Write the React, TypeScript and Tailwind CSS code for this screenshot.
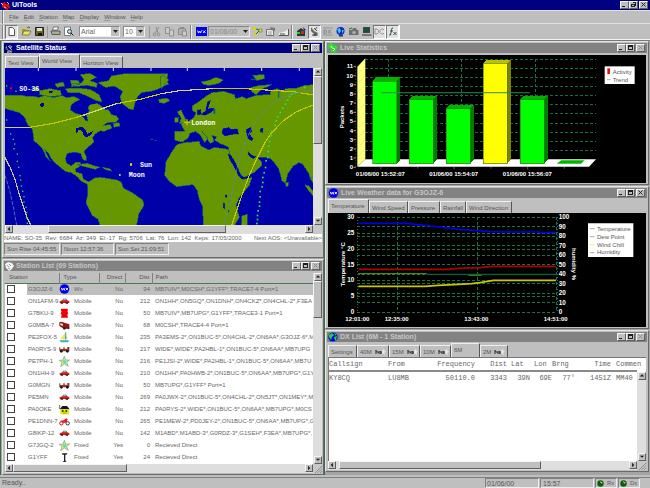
import React from "react";

type Kids = { children?: React.ReactNode };

const RAISED = "border border-t-[#f4f4f4] border-l-[#f4f4f4] border-r-[#5f5f5f] border-b-[#5f5f5f] bg-[#bfbfbf]";

/* ---------- window frame ---------- */

function CaptionButton({ kind, dim }: { kind: "min" | "max" | "restore" | "close"; dim?: boolean }) {
  const c = dim ? "#8a8a8a" : "#202020";
  return (
    <button aria-label={kind} className={`flex h-2 w-[9px] items-center justify-center ${RAISED}`}>
      <svg viewBox="0 0 7 6" className="h-[6px] w-[7px]" shapeRendering="crispEdges" fill="none" stroke={c}>
        {kind === "min" && <path d="M1 4.500h3" />}
        {kind === "max" && <path d="M1.500 1.500h4v3h-4zM1 .8h5" />}
        {kind === "restore" && <path d="M2.500 .5h3v3M1.500 2.500h3v2h-3z" />}
        {kind === "close" && <path d="M1.500 .5l4 4M5.500 .5l-4 4" shapeRendering="auto" />}
      </svg>
    </button>
  );
}

function TitleBar({ title, icon, active, maxed, dimClose }: { title: string; icon: React.ReactNode; active?: boolean; maxed?: boolean; dimClose?: boolean }) {
  return (
    <div className={`flex h-[10px] shrink-0 items-center pl-px pr-[2px] ${active ? "bg-[#000080]" : "bg-[#828282]"}`}>
      {icon}
      <h2 className={`ml-[2px] flex-1 truncate font-bold text-[7px] leading-[10px] ${active ? "text-white" : "text-[#c6c6c6]"}`}>{title}</h2>
      <CaptionButton kind="min" />
      <CaptionButton kind={maxed ? "restore" : "max"} />
      <span className="w-px" />
      <CaptionButton kind="close" dim={dimClose} />
    </div>
  );
}

function ChildWindow({ title, icon, active, dimClose, children }: Kids & { title: string; icon: React.ReactNode; active?: boolean; dimClose?: boolean }) {
  return (
    <section className="flex min-w-0 flex-col border border-t-[#e6e6e6] border-l-[#e6e6e6] border-r-[#6a6a6a] border-b-[#6a6a6a] bg-[#bfbfbf] p-px">
      <TitleBar title={title} icon={icon} active={active} dimClose={dimClose} />
      {children}
    </section>
  );
}

function Tabs({ items, active }: { items: { label: string; w: string; mark?: boolean }[]; active: string }) {
  return (
    <div role="tablist" className="flex h-[15px] items-end pl-px text-[#555]">
      {items.map((t) => {
        const on = t.label === active;
        return (
          <button
            key={t.label}
            role="tab"
            aria-selected={on}
            className={`flex items-center whitespace-nowrap border-t border-l border-r border-t-[#f0f0f0] border-l-[#f0f0f0] border-r-[#555] pl-[2px] leading-[10px] ${t.w} ${on ? "h-[14px] pb-[2px]" : "h-3"}`}
          >
            {t.label}
            {t.mark && (
              <svg viewBox="0 0 11 7" className="ml-[3px] h-[7px] w-[11px] shrink-0">
                <path d="M1 2v4M1 2.500l3 3V3M5 3l2 3M7 3L5 6" stroke="#222" fill="none" />
                <path d="M8.500 0l1 2.500L11 3 9.500 4.500 10 7 8 5.500 6.500 6.500 7 4 6 2.500h2z" fill="#e6e6e6" />
              </svg>
            )}
          </button>
        );
      })}
    </div>
  );
}

/* ---------- scroll bars ---------- */

function Arrow({ dir }: { dir: "up" | "down" | "left" | "right" }) {
  const d = { up: "M1 4h5L3.500 1.500z", down: "M1 2h5L3.500 4.500z", left: "M4.500 1v5L2 3.500z", right: "M2.500 1v5L5 3.500z" }[dir];
  return (
    <button aria-label={`Scroll ${dir}`} className={`flex h-2 w-2 shrink-0 items-center justify-center ${RAISED}`}>
      <svg viewBox="0 0 7 7" className="h-[6px] w-[6px]"><path d={d} fill="#1c1c1c" /></svg>
    </button>
  );
}

function HScroll({ before, thumb, corner }: { before: number; thumb: number; corner?: boolean }) {
  return (
    <div className="flex h-[9px] shrink-0 bg-[#dedede]">
      <Arrow dir="left" />
      <div className="flex flex-1">
        <div style={{ width: `${before}%` }} />
        <div className={`h-2 ${RAISED}`} style={{ width: `${thumb}%` }} />
      </div>
      <Arrow dir="right" />
      <div className="flex w-[9px] items-end justify-end bg-[#c8c8c8]">
        {corner && (
          <svg viewBox="0 0 8 8" className="h-2 w-2" stroke="#808080" strokeWidth=".8"><path d="M1 8l7-7M3.500 8L8 3.500M6 8l2-2" /></svg>
        )}
      </div>
    </div>
  );
}

function VScroll({ thumb }: { thumb: number }) {
  return (
    <div className="flex w-[9px] shrink-0 flex-col items-center bg-[#dedede]">
      <Arrow dir="up" />
      <div className="w-full flex-1">
        {thumb > 0 && <div className={`w-[9px] ${RAISED}`} style={{ height: `${thumb}%` }} />}
      </div>
      <Arrow dir="down" />
    </div>
  );
}

/* ---------- icons ---------- */

const WxIcon = () => (
  <svg viewBox="0 0 12 12" className="h-[10px] w-[11px] shrink-0">
    <circle cx="6" cy="6" r="5.800" fill="#0000e8" />
    <path d="M2 4.500l1.300 3 1.200-2.500 1.200 2.500 1-3M7.500 7.500l3-3M8 4.800l2 2.700" stroke="#fff" fill="none" strokeWidth="1" />
  </svg>
);
const DishIcon = () => (
  <svg viewBox="0 0 9 9" className="h-[9px] w-[9px] shrink-0">
    <path d="M1 1l2 5 5 1-3 1-1 1H2l1-2L1 4z" fill="#9a9a9a" />
    <path d="M3 2l4 4M5 1v3M7 2L5 5M2 8h5" stroke="#ddd" fill="none" strokeWidth=".8" />
    <path d="M0 3l2 3M3 8h2" stroke="#4a4a4a" />
  </svg>
);
const GlobeIcon = () => (
  <svg viewBox="0 0 10 10" className="h-[10px] w-[10px] shrink-0">
    <circle cx="5" cy="5" r="4.600" fill="#0000e0" />
    <path d="M1 3l3-2 2 2-2 2-1 3-2-3zM6 5l3-1-1 4-1 1zM6 1l3 2-2 .5z" fill="#18d840" />
  </svg>
);
const LeafIcon = () => (
  <svg viewBox="0 0 10 10" className="h-[10px] w-[10px] shrink-0">
    <path d="M0 2l3-2 3 2-2 3-3 1zM4 4l4-2 2 3-3 2zM2 6l3 0 4 2-3 2-3-1z" fill="#2be22b" />
    <path d="M3 3l1 2 3 1-2 2" stroke="#e8ffe8" fill="none" />
  </svg>
);
const HandIcon = () => (
  <svg viewBox="0 0 9 9" className="h-[9px] w-[9px] shrink-0">
    <path d="M0 2l3-2 4 1 2 3-3 4-2 1-3-3z" fill="#f2f2f2" />
    <path d="M2 3l2 2M4 2l2 2M3 6l2 1" stroke="#777" strokeWidth=".7" />
  </svg>
);
const AppIcon = () => (
  <svg viewBox="0 0 9 9" className="h-[9px] w-[9px] shrink-0">
    <path d="M1 2l3-1 1 2 3 0 1 4-3 2-3-2-2-1z" fill="#e01010" />
    <path d="M0 2l2 2M6 1l2 2M3 6l2 1" stroke="#fff" strokeWidth=".8" />
    <path d="M5 5l3 3" stroke="#111" />
  </svg>
);

type Sym = "wx" | "car" | "shirt" | "van" | "boat" | "jeep" | "star" | "house" | "bike" | "mast";

function StationSymbol({ kind }: { kind: Sym }) {
  if (kind === "wx") return <WxIcon />;
  return (
    <svg viewBox="0 0 33 33" className="h-[11px] w-[11px]">
      {kind === "car" && (
        <g><path d="M2 16l8-3 3-5h8l4 5 6 3v5H2z" fill="#e01818" /><path d="M12 13l2-4h6l2 4z" fill="#30d8d8" /><path d="M5 19h7v4H5zM20 19h7v4h-7z" fill="#222" /></g>
      )}
      {kind === "shirt" && <path d="M7 2h18l2 4-2 5 3 5-3 5 2 8H6l2-8-3-5 3-5-3-5z" fill="#f00000" />}
      {kind === "van" && (
        <g><path d="M1 7l6-2 24 8v13H14L1 18z" fill="#9c1212" /><path d="M4 9l8 3v6l-8-3z" fill="#d8e8f0" /><circle cx="16" cy="25" r="4" fill="#222" /><circle cx="28" cy="24" r="3" fill="#222" /></g>
      )}
      {kind === "boat" && (
        <g><path d="M20 1L4 22h16z" fill="#e8e848" /><path d="M20 1v22" stroke="#159" strokeWidth="2" /><path d="M20 4l6 17h-5z" fill="#8ee0e0" /><path d="M1 25h30l-5 6H6z" fill="#30b0b8" /></g>
      )}
      {kind === "jeep" && (
        <g><path d="M1 10h3v5h9v-5h4v5h8v-6h6v13H1z" fill="#6e4038" /><circle cx="7" cy="22" r="4" fill="#151515" /><circle cx="25" cy="22" r="4" fill="#151515" /><path d="M3 15h8v4H3zM18 14h8v4h-8z" fill="#c8281c" /></g>
      )}
      {kind === "star" && (
        <g><path d="M16 1l4 11 12 0-9 7 5 12-12-7-11 8 4-13-8-6 11-1z" fill="#f0f040" stroke="#4878a8" strokeWidth="1.500" /><path d="M12 13h9v9h-9z" fill="#40e0e8" /></g>
      )}
      {kind === "house" && (
        <g><path d="M2 3v12" stroke="#222" strokeWidth="2" /><path d="M2 16L10 6h14l8 10z" fill="#181818" /><path d="M4 16h26v15H4z" fill="#e8e800" /><path d="M9 19h4v4H9zM20 19h4v4h-4zM12 27h10" fill="#222" stroke="#222" /></g>
      )}
      {kind === "bike" && (
        <g><circle cx="7" cy="22" r="5" fill="none" stroke="#b01818" strokeWidth="3" /><circle cx="26" cy="22" r="5" fill="none" stroke="#333" strokeWidth="3" /><path d="M4 14l10-1 8-6 4 3-4 10H10z" fill="#f01818" /></g>
      )}
      {kind === "mast" && <path d="M9 4h16l-2 4h-4v18l4 4H11l4-4V8h-5z" fill="#222" />}
    </svg>
  );
}

/* ---------- tool bar ---------- */

function Tool({ name, pressed, children }: Kids & { name: string; pressed?: boolean }) {
  return (
    <button
      aria-label={name}
      className={`flex h-[14px] w-[13px] shrink-0 items-center justify-center border ${pressed ? "border-t-[#777] border-l-[#777] border-r-white border-b-white bg-[#e2e2e2]" : "border-transparent"}`}
    >
      <svg viewBox="0 0 11 11" className="h-[11px] w-[11px] shrink-0" fill="none">{children}</svg>
    </button>
  );
}

const Band = () => <span className="mx-px h-[14px] w-[2px] shrink-0 border-l border-r border-l-[#808080] border-r-[#f0f0f0]" />;

function Combo({ label, value, w, plain }: { label: string; value: string; w: string; plain?: boolean }) {
  return (
    <label className={`relative flex h-[11px] shrink-0 border border-t-[#8a8a8a] border-l-[#8a8a8a] border-r-[#eee] border-b-[#eee] ${w} ${plain ? "bg-[#bfbfbf] text-[#8a8a8a]" : "bg-white text-[#666]"}`}>
      <select aria-label={label} defaultValue={value} className="w-full appearance-none bg-transparent pl-px text-[7px] leading-[9px] outline-none">
        <option>{value}</option>
      </select>
      <span className="pointer-events-none absolute right-0 top-0 flex h-[9px] w-[8px] items-center justify-center bg-[#bfbfbf]">
        <svg viewBox="0 0 5 3" className="h-[3px] w-[5px]"><path d="M0 0h5L2.500 3z" fill="#222" /></svg>
      </span>
    </label>
  );
}

function ToolBar() {
  return (
    <div className="flex h-4 shrink-0 items-center border-b border-b-[#f2f2f2] bg-[#bfbfbf] pl-px">
      <Band />
      <Tool name="New" pressed><path d="M3 1.500h3.500l2 2v6H3z" fill="#fff" stroke="#555" /></Tool>
      <span className="w-[2px]" />
      <Tool name="Open"><path d="M1 3h3l1 1h3v5H1z" fill="#a8a000" /><path d="M1 9l2-4h7L8 9z" fill="#f0e850" stroke="#444" strokeWidth=".6" /><path d="M6 2c1-1 2-1 3 0" stroke="#222" strokeWidth=".8" /></Tool>
      <Tool name="Save"><path d="M1.500 1.500h8v8h-8z" fill="#6a6a10" stroke="#222" /><path d="M3 2h5v3H3z" fill="#ddd" /><path d="M4 7h4v2H4z" fill="#111" /></Tool>
      <span className="mx-px h-3 w-px bg-[#999]" />
      <Tool name="Print"><path d="M3.500 1h5l-1 3h-5z" fill="#fff" stroke="#555" strokeWidth=".8" /><path d="M1 5h9v3.500H2z" fill="#aaa" stroke="#444" strokeWidth=".8" /><path d="M6 7h2" stroke="#cc0" /></Tool>
      <Tool name="Print preview"><path d="M1.500 1h6v8.500h-6z" fill="#fff" stroke="#666" strokeWidth=".8" /><circle cx="6.500" cy="5.500" r="2" stroke="#245" fill="#bde" /><path d="M8 7l2.500 2.500" stroke="#222" /></Tool>
      <span className="w-1" />
      <Combo label="Font" value="Arial" w="w-[41px]" />
      <span className="w-[3px]" />
      <Combo label="Font size" value="10" w="w-[22px]" />
      <span className="w-1" />
      <span className="h-3 w-px bg-[#999]" />
      <Tool name="Cut"><path d="M5 1l2 6M8 1L4 7" stroke="#8d8d8d" /><circle cx="3.500" cy="8.500" r="1.300" stroke="#8d8d8d" /><circle cx="7.500" cy="8.500" r="1.300" stroke="#8d8d8d" /></Tool>
      <Tool name="Copy"><path d="M1.500 1.500h4v6h-4zM5.500 4h4v6h-4z" fill="#ccc" stroke="#8d8d8d" /></Tool>
      <Tool name="Paste"><path d="M1.500 2.500h7v6h-7z" fill="#b0b0b0" stroke="#8d8d8d" /><path d="M3 1.500h4M5.500 5h4v5h-4z" fill="#ccc" stroke="#8d8d8d" /></Tool>
      <Band />
      <span className="w-[2px]" />
      <Tool name="Weather"><path d="M0 1h11v9H0z" fill="#0000f0" /><path d="M1.500 4.500l1 2.500 1-2 1 2 1-2.500M7 4.500L9.500 7M9.500 4.500L7 7" stroke="#fff" strokeWidth=".9" /></Tool>
      <Combo label="Date" value="01/06/00" w="w-[42px]" plain />
      <span className="w-px" />
      <Tool name="Tree"><path d="M1 1h3v3H1zM2 7h3v3H2z" fill="#d8d800" /><path d="M7 3h3v3H7z" fill="#e0e020" stroke="#555" strokeWidth=".5" /><path d="M4 3l3 1M4 8l3-3" stroke="#127a30" /></Tool>
      <Tool name="Properties"><path d="M1.500 3.500h7v6h-7z" fill="#eee" stroke="#555" strokeWidth=".8" /><path d="M5 1l5 1v3L6 4z" fill="#777" /><path d="M3 6h4M3 8h4" stroke="#777" strokeWidth=".7" /></Tool>
      <Tool name="Chart"><path d="M1 9h9V3L8 5 5 6 1 7z" fill="#eee" /><path d="M1 9.500h9.500V3" stroke="#555" /><path d="M2 8h5" stroke="#2b6a3a" /></Tool>
      <Band />
      <span className="w-px" />
      <Tool name="Stations"><path d="M1 5l4-3 4 3v5H1z" fill="#17402a" /><path d="M5 5h3v3H5z" fill="#e02020" /><path d="M7 1l3 3-2 1z" fill="#22b" /><path d="M1 6h3v2H1z" fill="#2c2" /></Tool>
      <Tool name="Satellite" pressed><path d="M2 1l3 4 4 2-2 3H4l1-2-3-3z" fill="#666" /><path d="M5 2l3 3M8 1L6 4M3 9h6" stroke="#333" strokeWidth=".8" /></Tool>
      <Tool name="DX"><path d="M1 2h9.500M1 9h9.500" stroke="#8a8a8a" strokeWidth=".8" /><path d="M2 4v3.500h1.500l1-1V5l-1-1zM6 4l3 3.500M9 4L6 7.500" stroke="#777" strokeWidth=".9" /></Tool>
      <Tool name="World"><circle cx="5.500" cy="5" r="4" fill="#1020d0" /><path d="M2 3l3-1 1 3-2 3zM7 4h2L7 8z" fill="#30d0e0" /><path d="M4 9h4v1.500H4z" fill="#333" /></Tool>
      <Tool name="Camera"><path d="M1 4h3l1-2h3l1 2h1.500v5H1z" fill="#6b7068" /><circle cx="6" cy="6.500" r="1.700" fill="#a9b0a4" /><path d="M1 3l3-1" stroke="#345f3c" /></Tool>
      <Tool name="Terminal"><path d="M2 1h7v6H2z" fill="#444" /><path d="M3 2h5v4H3z" fill="#14523c" /><path d="M1 8h9.500v2H1z" fill="#777" /></Tool>
      <Tool name="DC" pressed><path d="M1 3v5h2l1.500-1.500v-2L3 3zM10 4L9 3H7.500L6 4.500v2L7.500 8H9l1-1" stroke="#8a8a8a" strokeWidth=".9" /></Tool>
      <Tool name="Function" pressed><path d="M6 2H5L3.500 9H2M3 5h3M6.500 6l3 3M9.500 6l-3 3" stroke="#355a40" /></Tool>
      <span className="h-[14px] w-px bg-white" />
    </div>
  );
}

/* ---------- satellite map ---------- */

function WorldMap() {
  const westDots = [[18, 76], [46, 92], [18, 178], [30, 220], [38, 236], [42, 250], [40, 264], [50, 280], [50, 302], [54, 320], [58, 345], [60, 358], [62, 376], [66, 392], [70, 408], [70, 424], [76, 440], [78, 456], [78, 472], [80, 488]];
  const eastDots = [[433, 80], [405, 95], [395, 100], [388, 107], [382, 118], [376, 130], [368, 142], [360, 155], [352, 168], [348, 180], [345, 194], [335, 212], [334, 225], [328, 242], [326, 256], [324, 272], [323, 290], [318, 300], [316, 320], [312, 336], [308, 350], [308, 365], [306, 378], [300, 392], [300, 408], [298, 424], [298, 436], [294, 450], [292, 464], [292, 476], [290, 488]];
  return (
    <svg viewBox="15 24 924 471" preserveAspectRatio="xMidYMid slice" className="h-[157px] min-w-0 flex-1 bg-[#0000a8]" role="img" aria-label="World map">
      <g fill="#669600" stroke="#0a6a68" strokeWidth="2" shapeRendering="crispEdges">
        {/* Americas */}
        <path d="M10 105L60 105 75 108 98 109 118 112 135 106 160 113 185 107 200 113 222 110 240 118 228 124 214 134 211 150 226 160 240 163 250 172 256 182 264 184 260 168 268 152 264 142 270 134 290 130 304 138 312 148 326 150 334 164 350 168 356 178 348 186 322 188 310 196 332 194 336 204 312 214 300 212 286 222 278 232 282 246 264 262 252 274 258 288 258 302 248 298 242 280 226 276 202 280 196 296 200 310 214 318 228 306 244 308 238 320 226 326 228 336 246 342 250 358 266 366 284 354 300 352 316 354 350 360 364 366 370 384 394 396 428 420 432 436 416 462 410 496 300 496 294 478 276 466 264 440 258 428 264 400 262 372 244 364 232 350 214 338 196 334 176 318 158 302 146 280 134 268 144 292 152 304 138 290 126 264 102 242 97 206 84 196 74 172 58 158 10 144z" />
        {/* Arctic islands */}
        <path d="M118 92L150 86 182 92 184 106 150 110 120 104zM164 72L190 66 194 78 172 82zM210 60L236 62 240 74 216 76zM240 44L270 40 290 52 270 62 292 70 290 82 262 76 240 78 214 80 216 72 244 70 252 58zM196 86L230 84 270 88 298 104 306 126 284 120 262 108 236 98 204 98zM98 84L112 80 118 90 104 94z" />
        <path d="M294 68L326 62 334 48 368 42 504 41 500 60 506 72 484 82 462 92 424 98 408 116 400 150 386 146 366 130 360 110 368 94 344 78 316 82z" />
        <path d="M340 190L358 188 360 198 342 202zM232 314L262 310 284 318 300 322 286 328 262 322zM308 322L330 326 336 334 314 328z" />
        <path d="M476 118L500 114 510 122 494 130 478 128z" />
      </g>
      <g transform="translate(480 0)">
        <g fill="#669600" stroke="#0a6a68" strokeWidth="2" shapeRendering="crispEdges">
          {/* Europe, Asia */}
          <path d="M45 214L75 214 66 198 62 190 86 184 102 172 108 158 98 152 96 138 112 128 136 110 156 98 190 94 224 104 226 116 248 110 260 116 288 106 330 104 332 92 350 86 372 94 376 86 410 84 434 76 470 74 470 380 452 360 446 340 428 312 416 308 400 318 384 340 376 370 366 362 356 326 340 304 326 292 290 292 304 304 306 316 284 336 250 354 236 334 206 282 206 262 180 250 164 240 170 230 156 226 162 244 150 250 136 226 124 212 144 236 134 248 122 226 106 214 90 220 84 234 66 246 44 240z" />
          {/* Africa */}
          <path d="M50 254L74 248 118 244 122 258 148 270 162 262 206 268 212 292 226 318 238 350 246 358 276 352 268 376 238 412 228 436 238 472 224 496 130 496 128 438 118 420 112 392 100 374 50 380 28 364 14 346 18 306 34 278z" />
          <path d="M52 156L64 150 72 168 80 186 58 190 64 174zM44 174L56 172 54 186 44 186zM124 66L150 60 168 52 190 60 176 70 150 76 132 74zM278 46L312 44 314 56 290 62zM274 82L300 76 336 74 304 88 288 104 276 96zM246 468L262 462 262 496 244 496zM434 374L446 378 470 404 470 420 446 392zM376 370L386 366 384 378 378 378zM0 50L10 46 26 60 4 86zM450 352L466 354 466 366 456 364z" />
        </g>
        <g fill="#0000a8" stroke="#0a6a68" strokeWidth="1" shapeRendering="crispEdges">
          <path d="M188 206L206 202 214 208 232 206 236 222 214 224 196 228 186 222zM258 208L274 200 276 214 268 222 280 236 276 244 262 234zM300 206L310 204 308 218 300 216zM264 274L274 284 288 290 280 296 266 288zM112 150L122 148 124 164 112 164zM142 126L152 120 144 146 162 144 166 150 136 166 120 164 136 154z" />
          <path d="M204 280L212 284 228 310 242 344 252 352 270 348 270 354 246 358 234 346 218 314 206 292z" />
          <path d="M196 404L202 404 200 414 196 412zM190 428L194 430 194 446 190 444zM202 450L208 450 206 458z" />
        </g>
      </g>
      <g fill="#0000a8" shapeRendering="crispEdges">
        <path d="M226 206L244 200 254 206 262 222 278 214 276 222 260 232 250 226 246 212 236 210 230 222z" />
        <path d="M120 132L132 128 130 142 122 140zM146 92L160 92 156 100 148 98zM244 120L262 118 286 124 290 130 268 132 246 138z" />
      </g>
      <g fill="#0a6a78"><path d="M452 236h8v3h-8zM464 240h6v3h-6zM640 148h6v14h-6zM834 94h4v20h-4zM752 56h18v3h-18z" /></g>
      <path d="M115 24v9M228 24v9M340 24v9M453 24v9M562 24v9M673 24v9M785 24v9M898 24v9" stroke="#e8e8e8" strokeWidth="3" />
      <g fill="none" strokeWidth="3.500" shapeRendering="crispEdges">
        <path d="M15 203H88" stroke="#c8c8a0" />
        <path d="M88 202L160 190 230 172 270 158 350 131 420 118 480 102 540 92 640 86 720 85 800 90 880 95 939 105" stroke="#c8c800" />
        <path d="M250 166L350 131 M480 102L540 92 640 86" stroke="#d8d880" />
        <path d="M939 135L890 155 850 182 815 218 795 248 770 297 748 345 720 422 695 496" stroke="#c8c800" />
        <path d="M15 293L32 325 46 362 60 410 80 470 93 496" stroke="#c8c880" />
      </g>
      <g fill="none" stroke="#5f86a8" strokeWidth="2.500">
        <path d="M15 346L30 395 42 450 50 496" strokeDasharray="12 4" />
        <path d="M939 92L880 100 830 120 790 155 765 187 740 235 720 290 705 350 690 430 670 496" strokeDasharray="14 3" />
      </g>
      <g fill="#30e050">
        {westDots.map(([x, y]) => <rect key={`${x}-${y}`} x={x} y={y} width="4" height="4" />)}
        {eastDots.map(([x, y]) => <rect key={`${x}-${y}`} x={x + 478} y={y} width="5" height="5" />)}
      </g>
      <path d="M30 82h6v6h-6z" fill="#f00" />
      <path d="M390 310h6v7h-6z" fill="#e8e800" />
      <path d="M357 342h5v6h-5z" fill="#b8b8a0" />
      <path d="M551 187h20M561 178v18" stroke="#d8c000" strokeWidth="4" />
      <g fill="#fff" fontFamily="'Liberation Mono', monospace" fontWeight="700" fontSize="20">
        <text x="58" y="92">SO-36</text>
        <text x="420" y="321">Sun</text>
        <text x="386" y="351">Moon</text>
        <text x="574" y="195">London</text>
      </g>
    </svg>
  );
}

function SatelliteWindow() {
  return (
    <ChildWindow title="Satellite Status" icon={<DishIcon />} active dimClose>
      <Tabs active="World View" items={[{ label: "Text View", w: "w-[34px]" }, { label: "World View", w: "w-[41px]" }, { label: "Horizon View", w: "w-[43px]" }]} />
      <div className="flex pl-px">
        <WorldMap />
        <VScroll thumb={48} />
      </div>
      <div className="pl-px"><HScroll before={12} thumb={61} /></div>
      <p className="flex h-2 justify-between overflow-hidden whitespace-pre bg-white leading-[8px] text-[#666]">
        <span>NAME: SO-35  Rev: 6684  Az: 349  El:-17  Rg: 5706  Lat: 76  Lon: 142  Keps: 17/05/2000</span>
        <span>Next AOS: &lt;Unavailable&gt;</span>
      </p>
      <div className="flex h-[14px] items-center gap-px text-[#555]">
        {[["Sun Rise 04:45:55", "w-14"], ["Noon 12:57:36", "w-[53px]"], ["Sun Set 21:09:51", "w-[54px]"]].map(([t, w]) => (
          <span key={t} className={`h-3 whitespace-nowrap border border-t-[#808080] border-l-[#808080] border-r-[#eee] border-b-[#eee] pl-[2px] leading-[10px] ${w}`}>{t}</span>
        ))}
      </div>
    </ChildWindow>
  );
}

/* ---------- station list ---------- */

const stations: [string, Sym, string, string, string, string][] = [
  ["G3OJZ-6", "wx", "Wx", "No", "94", "MB7UIV*,M0CSH*,G1YFF*,TRACE7-4 Port=1"],
  ["ON1AFM-9", "car", "Mobile", "No", "212", "ON1HH*,ON5GQ*,ON1DNH*,ON4CKZ*,ON4CHL-2*,F3EA"],
  ["G7BKU-9", "shirt", "Mobile", "No", "50", "MB7UIV*,MB7UPG*,G1YFF*,TRACE3-1 Port=1"],
  ["G0MBA-7", "van", "Mobile", "No", "68", "M0CSH*,TRACE4-4 Port=1"],
  ["PE2FOX-5", "boat", "Mobile", "No", "235", "PA3EMS-2*,ON1BUC-5*,ON4CHL-2*,ON6AA*,G3OJZ-6*,M"],
  ["PA0RYS-9", "jeep", "Mobile", "No", "217", "WIDE*,WIDE*,PA2HBL-1*,ON1BUC-5*,ON6AA*,MB7UPG"],
  ["PE7PH-1", "star", "Mobile", "No", "216", "PE1JSI-2*,WIDE*,PA2HBL-1*,ON1BUC-5*,ON6AA*,MB7U"],
  ["ON1HH-9", "car", "Mobile", "No", "210", "ON1HH*,PA0HWB-2*,ON1BUC-5*,ON6AA*,MB7UPG*,G1Y"],
  ["G0MGN", "jeep", "Mobile", "No", "50", "MB7UPG*,G1YFF* Port=1"],
  ["PE5MN", "car", "Mobile", "No", "269", "PA0JWX-2*,ON1BUC-5*,ON4CHL-2*,ON5JT*,ON1MEY*,M"],
  ["PA0OKE", "house", "Mobile", "No", "212", "PA0RYS-2*,WIDE*,ON1BUC-5*,ON6AA*,MB7UPG*,M0CS"],
  ["PE1DNN-7", "bike", "Mobile", "No", "265", "PE1MEW-2*,PD0JEY-2*,ON1BUC-5*,ON6AA*,MB7UPG*,G"],
  ["G8IKP-12", "car", "Mobile", "No", "142", "M1ABD*,M1ABD-3*,G0RDZ-3*,G1SEH*,F3EA*,MB7UPG*,"],
  ["G7JGQ-2", "star", "Fixed", "Yes", "0", "Recieved Direct"],
  ["G1YFF", "mast", "Fixed", "Yes", "24", "Recieved Direct"],
];

function StationWindow() {
  const th = "border-r border-r-[#808080] p-0 font-normal";
  return (
    <ChildWindow title="Station List (69 Stations)" icon={<HandIcon />} dimClose>
      <div className="mt-[2px] flex h-[191px] pl-px">
        <div className="min-w-0 flex-1 overflow-hidden bg-white">
          <table className="w-full table-fixed border-collapse text-[#666]">
            <colgroup>
              <col className="w-[22px]" /><col className="w-8" /><col className="w-[14px]" /><col className="w-[26px]" /><col className="w-[26px]" /><col className="w-[27px]" /><col />
            </colgroup>
            <thead>
              <tr className="h-[10px] border-b border-b-[#4a7a50] bg-[#bfbfbf] text-left leading-[9px] text-[#555]">
                <th colSpan={2} className={`${th} pl-1`}>Station</th>
                <th colSpan={2} className={`${th} pl-1`}>Type</th>
                <th className={`${th} pr-[2px] text-right`}>Direct</th>
                <th className={`${th} pr-[2px] text-right`}>Dist</th>
                <th className="p-0 pl-[3px] font-normal">Path</th>
              </tr>
            </thead>
            <tbody>
              {stations.map(([call, sym, type, direct, dist, path], i) => (
                <tr key={call} className="h-3 whitespace-nowrap leading-[11px]">
                  <td className="p-0 pl-[2px]">
                    <input type="checkbox" aria-label={call} className="block h-2 w-2 appearance-none border border-[#444] bg-white" />
                  </td>
                  <td className={`p-0 pl-px ${i === 0 ? "bg-[#bfbfbf]" : ""}`}>{call}</td>
                  <td className={`p-0 ${i === 0 ? "bg-[#bfbfbf]" : ""}`}><StationSymbol kind={sym} /></td>
                  <td className={`p-0 pl-px ${i === 0 ? "bg-[#bfbfbf]" : ""}`}>{type}</td>
                  <td className={`p-0 pr-[2px] text-right ${i === 0 ? "bg-[#bfbfbf]" : ""}`}>{direct}</td>
                  <td className={`p-0 pr-[2px] text-right ${i === 0 ? "bg-[#bfbfbf]" : ""}`}>{dist}</td>
                  <td className={`overflow-hidden p-0 pl-[3px] ${i === 0 ? "bg-[#bfbfbf]" : ""}`}>{path}</td>
                </tr>
              ))}
            </tbody>
          </table>
        </div>
        <VScroll thumb={21} />
      </div>
      <div className="pl-px"><HScroll before={0} thumb={39} corner /></div>
    </ChildWindow>
  );
}

/* ---------- statistics chart ---------- */

const SANS = "'Liberation Sans', Arial, sans-serif";

function StatsChart() {
  const bars = [[143, 123], [253, 179], [364, 206], [475, 70], [586, 179]];
  const rows = Array.from({ length: 12 }, (_, i) => i);
  return (
    <svg viewBox="9 45 954 384" className="mt-[2px] ml-px mr-px h-[128px] bg-black" role="img" aria-label="Packets over time" fontFamily={SANS}>
      <g stroke="#14703c" strokeWidth="3" strokeDasharray="9 6" shapeRendering="crispEdges">
        {rows.slice(0, 11).map((i) => <path key={i} d={`M121 ${57 + Math.round(i * 27.4)}H813`} />)}
        <path d="M190 57V358M410 57V358M631 57V358" />
      </g>
      <path d="M97 380L121 358H813L792 380z" fill="#fff" />
      <path d="M97 80L121 55V358L97 380z" fill="#ffff80" />
      <path d="M100 100l20-20M100 128l20-20M100 155l20-20M100 182l20-20M100 210l20-20M100 237l20-20M100 264l20-20M100 292l20-20M100 320l20-20M100 347l20-20" stroke="#d0cc60" />
      {bars.map(([x, y]) => {
        const yellow = y < 100;
        return (
          <g key={x} shapeRendering="crispEdges">
            <path d={`M${x} ${y}l11 -11h71l-10 11z`} fill={yellow ? "#c0c000" : "#00b400"} />
            <path d={`M${x + 72} ${y}l10 -11V360l-10 11z`} fill={yellow ? "#808000" : "#007c00"} />
            <path d={`M${x} ${y}h72V371h-72z`} fill={yellow ? "#ffff00" : "#00ff00"} stroke="#3c7a1c" strokeWidth="2" />
          </g>
        );
      })}
      <path d="M695 371L709 361H779L768 371z" fill="#00b400" />
      <path d="M170 158H614" stroke="#2c8a50" strokeWidth="4" opacity=".8" />
      <path d="M92 80V380" stroke="#14703c" strokeWidth="3" strokeDasharray="3 6" />
      <path d="M168 381v7M387 381v7M608 381v7M278 381v5M498 381v5M718 381v5" stroke="#888" strokeWidth="2" />
      <g fill="#fff" fontSize="18" fontWeight="700">
        {rows.map((n) => <text key={n} x="84" y={388 - Math.round(n * 27.5)} textAnchor="end">{n}</text>)}
        {rows.map((n) => <path key={n} d={`M86 ${382 - Math.round(n * 27.5)}h6`} stroke="#fff" strokeWidth="2" />)}
        <text x="166" y="409" textAnchor="middle">01/06/00 15:52:07</text>
        <text x="386" y="409" textAnchor="middle">01/06/00 15:54:07</text>
        <text x="607" y="409" textAnchor="middle">01/06/00 15:56:07</text>
        <text transform="translate(56 231) rotate(-90)" textAnchor="middle">Packets</text>
      </g>
      <path d="M839 79h90v53h-90z" fill="#fff" />
      <path d="M847 85h8v17h-8z" fill="#e01010" />
      <path d="M846 119h11" stroke="#888" strokeWidth="2" />
      <g fill="#555" fontSize="18"><text x="863" y="101">Activity</text><text x="863" y="125">Trend</text></g>
    </svg>
  );
}

/* ---------- weather chart ---------- */

function WeatherChart() {
  const left = [0, 5, 10, 15, 20, 25, 30];
  const right = [0, 10, 20, 30, 40, 50, 60, 70, 80, 90, 100];
  const yl = (v: number) => 381 - Math.round((v * 284) / 30);
  const yr = (v: number) => 381 - Math.round(v * 2.84);
  return (
    <svg viewBox="12 84 948 342" className="ml-px mr-px h-[114px] bg-black" role="img" aria-label="Temperature and humidity" fontFamily={SANS}>
      <g stroke="#1c7440" strokeWidth="3" strokeDasharray="9 6" shapeRendering="crispEdges">
        {left.map((v) => <path key={v} d={`M97 ${yl(v)}H693`} />)}
        {right.slice(1, 10).map((v) => <path key={v} d={`M97 ${yr(v)}H693`} />)}
        <path d="M217 97V381M456 97V381M693 97V381" />
        <path d="M96 97V381M698 97V381" strokeDasharray="3 6" />
      </g>
      <g fill="none" strokeWidth="5">
        <path d="M100 115H245L270 118 320 123 360 128 400 133 450 136 500 140 560 141 640 141 650 143H693" stroke="#0000e0" />
        <path d="M100 253H370L400 250 465 248 500 244H693" stroke="#b00000" />
        <path d="M100 266H305" stroke="#4c8a10" strokeWidth="4" /><path d="M305 268H693" stroke="#006838" strokeWidth="4" />
        <path d="M430 271H470" stroke="#4c8a10" strokeWidth="3" />
        <path d="M100 304H300L340 301 400 298 440 296 465 293 505 286H693" stroke="#c8c800" />
      </g>
      <g fill="#fff" fontSize="19" fontWeight="700">
        {left.map((v) => <text key={v} x="88" y={yl(v) + 6} textAnchor="end">{v}</text>)}
        {right.map((v) => <text key={v} x="701" y={yr(v) + 6}>{v}</text>)}
      </g>
      <g fill="#fff" fontSize="18" fontWeight="700" textAnchor="middle">
        <text x="97" y="409">12:01:00</text><text x="215" y="409">12:35:00</text><text x="454" y="409">13:43:00</text><text x="692" y="409">14:51:00</text>
        <text transform="translate(60 238) rotate(-90)">Temperature °C</text>
        <text transform="translate(742 237) rotate(90)">humidity %</text>
      </g>
      <path d="M789 115h136v101H789z" fill="#fff" />
      <path d="M795 131h14M795 155h14M795 203h14" stroke="#888" strokeWidth="2" />
      <path d="M795 179h14" stroke="#f0f000" strokeWidth="2" />
      <g fill="#555" fontSize="18"><text x="816" y="137">Temperature</text><text x="816" y="161">Dew Point</text><text x="816" y="185">Wind Chill</text><text x="816" y="208">Humidity</text></g>
    </svg>
  );
}

/* ---------- DX list ---------- */

function DxWindow() {
  return (
    <ChildWindow title="DX List (6M -  1 Station)" icon={<GlobeIcon />} dimClose>
      <Tabs
        active="6M"
        items={[{ label: "Settings", w: "w-[29px]" }, { label: "40M", w: "w-8", mark: true }, { label: "15M", w: "w-[31px]", mark: true }, { label: "10M", w: "w-[31px]", mark: true }, { label: "6M", w: "w-[29px]" }, { label: "2M", w: "w-7", mark: true }]}
      />
      <div className="mx-px flex h-[104px] overflow-hidden border-l border-t border-[#777] bg-white">
        <div className="min-w-0 flex-1">
          <table className="w-full table-fixed border-collapse whitespace-nowrap text-left font-['Liberation_Mono',monospace] text-[7px] leading-[12px] text-[#666]">
            <colgroup>
              <col className="w-[59px]" /><col className="w-[42px]" /><col className="w-[45px]" /><col className="w-8" /><col className="w-[23px]" /><col className="w-[22px]" /><col className="w-[23px]" /><col className="w-9" /><col />
            </colgroup>
            <thead>
              <tr className="h-[13px] border-b-2 border-b-[#8a8a8a]">
                {["Callsign", "From", "Frequency", "Dist", "Lat", "Lon", "Brng", "Time", "Commen"].map((h) => (
                  <th key={h} className={`p-0 font-normal last:pl-[5px] ${["Frequency", "Dist", "Time"].includes(h) ? "text-right" : ["Lat", "Lon"].includes(h) ? "pl-1" : ""}`}>{h}</th>
                ))}
              </tr>
            </thead>
            <tbody>
              <tr>
                <td className="p-0">KY8CQ</td><td className="p-0">LU8MB</td>
                {["50110.0", "3343", "39N", "69E", "77°", "1451Z"].map((v) => <td key={v} className="p-0 text-right">{v}</td>)}
                <td className="p-0 pl-[5px]">MM40</td>
              </tr>
            </tbody>
          </table>
        </div>
        <div className="mt-[14px] flex"><VScroll thumb={0} /></div>
      </div>
      <div className="mx-px"><HScroll before={1} thumb={69} corner /></div>
    </ChildWindow>
  );
}

/* ---------- page ---------- */

function StatusLed({ label }: { label: string }) {
  return (
    <span className="flex h-[10px] w-[22px] items-center gap-[3px] border border-t-[#808080] border-l-[#808080] border-r-[#eee] border-b-[#eee] pl-px">
      <svg viewBox="0 0 7 7" className="h-[7px] w-[7px]"><circle cx="3.500" cy="3.500" r="3.200" fill="#0f5a10" /><path d="M3 1l3 2-2 .5z" fill="#b8f070" /></svg>
      {label}
    </span>
  );
}

export default function App() {
  return (
    <main className="flex min-h-screen flex-col bg-[#bfbfbf] font-['Liberation_Sans',sans-serif] text-[6px] leading-[10px]">
      <header className="shrink-0">
        <TitleBar title="UiTools" icon={<AppIcon />} active maxed />
        <nav className="flex h-[14px] items-center border-y border-y-[#e0e0e0] pl-px text-[#555]">
          <Band />
          <div className="ml-1 flex gap-[5px]">
            {["File", "Edit", "Station", "Map", "Display", "Window", "Help"].map((m) => (
              <button key={m}><u className="decoration-[#999] underline-offset-1">{m[0]}</u>{m.slice(1)}</button>
            ))}
          </div>
        </nav>
        <ToolBar />
      </header>
      <div className="grid grid-cols-2 border-t border-t-[#777] bg-[#a4a4a4]">
        <div className="flex min-w-0 flex-col gap-px border-l border-r border-l-[#3f6a48] border-r-[#3f6a48] pl-px">
          <SatelliteWindow />
          <StationWindow />
        </div>
        <div className="flex min-w-0 flex-col gap-px pr-px">
          <ChildWindow title="Live Statistics" icon={<LeafIcon />} dimClose><StatsChart /></ChildWindow>
          <ChildWindow title="Live Weather data for G3OJZ-6" icon={<WxIcon />}>
            <Tabs
              active="Temperature"
              items={[{ label: "Temperature", w: "w-[41px]" }, { label: "Wind Speed", w: "w-[39px]" }, { label: "Pressure", w: "w-8" }, { label: "Rainfall", w: "w-[26px]" }, { label: "Wind Direction", w: "w-[46px]" }]}
            />
            <WeatherChart />
          </ChildWindow>
          <DxWindow />
        </div>
      </div>
      <footer className="mt-auto flex h-[11px] items-center gap-px border-t border-t-[#808080] pl-[2px] pr-[10px] text-[#555]">
        <span className="flex-1 text-[7px]">Ready..</span>
        <span className="h-[10px] w-[54px] border border-t-[#808080] border-l-[#808080] border-r-[#eee] border-b-[#eee] pl-px text-[7px] leading-[9px]">01/06/00</span>
        <span className="h-[10px] w-[54px] border border-t-[#808080] border-l-[#808080] border-r-[#eee] border-b-[#eee] pl-[2px] text-[7px] leading-[9px]">15:57</span>
        <StatusLed label="Rx" />
        <StatusLed label="Dx" />
      </footer>
    </main>
  );
}
